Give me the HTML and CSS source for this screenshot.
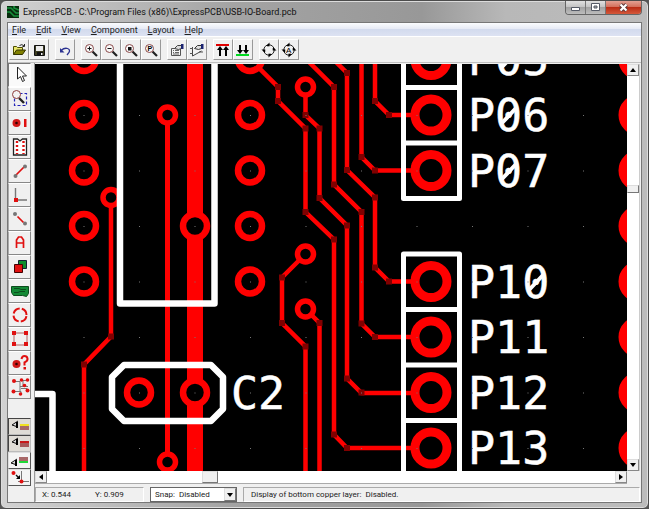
FILE: index.html
```html
<!DOCTYPE html>
<html lang="en">
<head>
<meta charset="utf-8">
<title>ExpressPCB - C:\Program Files (x86)\ExpressPCB\USB-IO-Board.pcb</title>
<link rel="stylesheet" href="styles.css">
</head>
<body>
<div class="window">
  <header class="titlebar">
    <svg class="app-icon" width="12" height="12" viewBox="0 0 12 12"><path fill="#072b0c" d="M0 0h12v12H0z"/><path fill="none" stroke="#15903a" stroke-width="1.600" d="M0 2h4l5 5h3M0 6h3l4 4h5M7 0v2l5 2"/></svg>
    <h1 class="title">ExpressPCB - C:\Program Files (x86)\ExpressPCB\USB-IO-Board.pcb</h1>
    <div class="controls">
      <button class="ctl" aria-label="Minimize"><svg width="11" height="9" viewBox="0 0 11 9"><path fill="#fff" stroke="#555a66" d="M1.500 4.500h8v3h-8z"/></svg></button>
      <button class="ctl" aria-label="Maximize"><svg width="11" height="9" viewBox="0 0 11 9"><path fill="#fff" stroke="#555a66" d="M1.500.5h8v7h-8z"/><path fill="#aaa" stroke="#555a66" d="M4 3h3v2H4z"/></svg></button>
      <button class="ctl close" aria-label="Close"><svg width="11" height="9" viewBox="0 0 11 9"><path stroke="#5c3a3a" stroke-width="4" d="M2.500 1.500l6 6m0-6l-6 6"/><path stroke="#fff" stroke-width="2.200" d="M2.500 1.500l6 6m0-6l-6 6"/></svg></button>
    </div>
  </header>
  <div class="client">
    <nav class="menubar">
      <button><u>F</u>ile</button><button><u>E</u>dit</button><button><u>V</u>iew</button><button><u>C</u>omponent</button><button><u>L</u>ayout</button><button><u>H</u>elp</button>
    </nav>
    <div class="toolbar">
      <div class="group">
        <button class="tool" aria-label="Open"><svg width="16" height="16" viewBox="0 0 16 16"><path fill="#e9e66a" stroke="#4c4c00" d="M2.500 12.500v-8h3l1 1h5v3"/><path fill="#808000" stroke="#333300" d="M2.500 12.500l3-4.500h9l-3 4.500z"/><path fill="none" stroke="#222" d="M8.500 3.500q2.500-2 4.500.5m.5-2v2.500h-2"/></svg></button>
        <button class="tool" aria-label="Save"><svg width="16" height="16" viewBox="0 0 16 16"><path fill="#3c3c20" stroke="#111" d="M3.500 3.500h10v10h-10z"/><path fill="#ececec" d="M5 4h7v5H5z"/><path fill="#111" d="M6 10h6v4H6z"/><path fill="#eee" d="M10 11h1.500v2H10z"/></svg></button>
      </div>
      <div class="group">
        <button class="tool" aria-label="Undo"><svg width="16" height="16" viewBox="0 0 16 16"><path fill="none" stroke="#2a3190" stroke-width="1.300" d="M4 8.500q3.500-3 6.500-2t1.500 4l-2 2.500"/><path fill="#2a3190" d="M3 6v4.500h4.500z"/></svg></button>
      </div>
      <div class="group">
        <button class="tool" aria-label="Zoom in"><svg width="16" height="16" viewBox="0 0 16 16"><path stroke="#222" stroke-width="2.200" d="M9.500 9.500l4.500 4.500"/><circle cx="6.500" cy="6.500" r="4" fill="#f8f8f8" stroke="#8b4a4a"/><path stroke="#111" d="M4.500 6.500h4m-2-2v4"/></svg></button>
        <button class="tool" aria-label="Zoom out"><svg width="16" height="16" viewBox="0 0 16 16"><path stroke="#222" stroke-width="2.200" d="M9.500 9.500l4.500 4.500"/><circle cx="6.500" cy="6.500" r="4" fill="#f8f8f8" stroke="#8b4a4a"/><path stroke="#111" d="M4.500 6.500h4"/></svg></button>
        <button class="tool" aria-label="Zoom to fit"><svg width="16" height="16" viewBox="0 0 16 16"><path stroke="#222" stroke-width="2.200" d="M9.500 9.500l4.500 4.500"/><circle cx="6.500" cy="6.500" r="4" fill="#f8f8f8" stroke="#8b4a4a"/><path fill="#111" d="M5 5h3.500v3.500H5z"/></svg></button>
        <button class="tool" aria-label="Zoom previous"><svg width="16" height="16" viewBox="0 0 16 16"><path stroke="#222" stroke-width="2.200" d="M9.500 9.500l4.500 4.500"/><circle cx="6.500" cy="6.500" r="4" fill="#f8f8f8" stroke="#8b4a4a"/><text class="icon-p" x="4.500" y="9">P</text></svg></button>
      </div>
      <div class="group">
        <button class="tool" aria-label="Properties"><svg width="16" height="16" viewBox="0 0 16 16"><path fill="#f4f4f4" stroke="#555" d="M2.500 6.500h9v7h-9z"/><path stroke="#666" d="M4 8.500h1m1 0h4M4 10.500h1m1 0h4M4 12h6"/><path fill="#ddd" stroke="#444" d="M5.500 6.500l3-3h4v3l-3 1z"/><path fill="#1a2370" d="M12 2h2.500v5H12z"/></svg></button>
        <button class="tool" aria-label="Component properties"><svg width="16" height="16" viewBox="0 0 16 16"><path fill="#f4f4f4" stroke="#444" d="M3.500 5v9l9-5"/><path stroke="#555" d="M1 6.500h3M1 11.500h3m6-1.500h4"/><path fill="#ddd" stroke="#333" d="M5.500 6.500l3-3h4v3l-3 1z"/><path fill="#1a2370" d="M12 2h2.500v5H12z"/></svg></button>
      </div>
      <div class="group">
        <button class="tool" aria-label="Top layer"><svg width="16" height="16" viewBox="0 0 16 16"><path fill="#e00000" d="M1 2h13v2H1z"/><path stroke="#000" stroke-width="2" d="M5 7v7m6-7v7"/><path d="M5 4l3 4H2zm6 0l3 4H8z"/></svg></button>
        <button class="tool" aria-label="Bottom layer"><svg width="16" height="16" viewBox="0 0 16 16"><path fill="#00d820" d="M1 12h13v2H1z"/><path stroke="#000" stroke-width="2" d="M5 3v6m6-6v6"/><path d="M5 12L2 8h6zm6 0L8 8h6z"/></svg></button>
      </div>
      <div class="group">
        <button class="tool" aria-label="Rotate"><svg width="16" height="16" viewBox="0 0 16 16"><circle cx="8" cy="8" r="5.200" fill="none" stroke="#222"/><path d="M5.500 3.500L8.500.5v6zM12.500 5.500l3 3h-6zM10.500 12.500l-3 3v-6zM3.500 10.500l-3-3h6z"/><circle cx="8" cy="8" r="3.800" fill="#f0f0f0"/></svg></button>
        <button class="tool" aria-label="Rotate by angle"><svg width="16" height="16" viewBox="0 0 16 16"><circle cx="8" cy="8" r="5.200" fill="none" stroke="#222"/><path d="M5.500 3.500L8.500.5v6zM12.500 5.500l3 3h-6zM10.500 12.500l-3 3v-6zM3.500 10.500l-3-3h6z"/><circle cx="8" cy="8" r="3.800" fill="#f0f0f0"/><text class="icon-a" x="5" y="11">A</text></svg></button>
      </div>
    </div>
    <div class="work">
      <aside class="palette">
        <button class="side on" aria-label="Select"><svg width="22" height="22" viewBox="0 0 22 22"><path fill="#fff" stroke="#222" d="M8.500 3v12l3-2.500 2 5 2-1-2-4.500h4z"/></svg></button>
        <button class="side" aria-label="Zoom region"><svg width="22" height="22" viewBox="0 0 22 22"><path fill="none" stroke="#2222b8" stroke-width="1.200" stroke-dasharray="3 2" d="M5.500 5.500h12v12h-12z"/><path stroke="#222" stroke-width="2.400" d="M10 10l5 5"/><circle cx="7.500" cy="6.500" r="4" fill="#f2f2f2" stroke="#8b3a3a"/></svg></button>
        <button class="side" aria-label="Place pad"><svg width="22" height="22" viewBox="0 0 22 22"><circle cx="7.500" cy="11" r="4" fill="#d01818"/><circle cx="7.500" cy="11" r="1.300" fill="#300"/><path fill="#e01010" d="M15 7h2.500v8H15z"/></svg></button>
        <button class="side" aria-label="Place component"><svg width="22" height="22" viewBox="0 0 22 22"><path fill="#fff" stroke="#222" stroke-width="1.300" d="M4.500 3h4l2.500 2 2.500-2h4v16h-13z"/><path stroke="#e01010" stroke-width="2.400" stroke-dasharray="2 2" d="M8 5v13m6.500-13v13"/></svg></button>
        <button class="side" aria-label="Place trace"><svg width="22" height="22" viewBox="0 0 22 22"><path stroke="#e01010" stroke-width="1.700" d="M7 15l8-8"/><circle cx="6.500" cy="16" r="2" fill="#777"/><circle cx="16" cy="6.500" r="2" fill="#777"/></svg></button>
        <button class="side" aria-label="Insert corner"><svg width="22" height="22" viewBox="0 0 22 22"><path fill="none" stroke="#777" stroke-width="1.400" d="M6.500 4v12H18"/><path fill="#e01010" d="M5 14h4v4H5z"/></svg></button>
        <button class="side" aria-label="Disconnect trace"><svg width="22" height="22" viewBox="0 0 22 22"><path stroke="#e01010" stroke-width="1.700" d="M8.500 8.500l6 6"/><circle cx="6" cy="6" r="2" fill="#777"/><circle cx="16" cy="15.500" r="2" fill="#777"/></svg></button>
        <button class="side" aria-label="Place text"><svg width="22" height="22" viewBox="0 0 22 22"><path fill="none" stroke="#e01010" stroke-width="1.700" d="M7.500 16V8l2-3h3l2 3v8m-7-5h7"/></svg></button>
        <button class="side" aria-label="Place rectangle"><svg width="22" height="22" viewBox="0 0 22 22"><path fill="#0c8c2c" stroke="#123" d="M9.500 4.500h8v8h-8z"/><path fill="#e01010" stroke="#400" d="M5.500 8.500h8v8h-8z"/></svg></button>
        <button class="side" aria-label="Place plane"><svg width="22" height="22" viewBox="0 0 22 22"><path fill="#128a35" stroke="#0a4c1c" d="M2.500 6.500h17v7l-2 3-4-1H4.500l-2-3z"/><path fill="none" stroke="#0a4c1c" d="M5 8.500h5l2 1h5M5 12.500h4l2-1h5"/></svg></button>
        <button class="side" aria-label="Place arc"><svg width="22" height="22" viewBox="0 0 22 22"><circle cx="11" cy="11" r="6.500" fill="none" stroke="#e01010" stroke-width="2" stroke-dasharray="8 2.210" stroke-dashoffset="-1.100"/></svg></button>
        <button class="side" aria-label="Place outline"><svg width="22" height="22" viewBox="0 0 22 22"><path fill="none" stroke="#b06060" d="M5 5h13v12H5z"/><path fill="#e01010" d="M3 3h4v4H3zM15 3h4v4h-4zM3 14h4v4H3zM15 14h4v4h-4z"/></svg></button>
        <button class="side" aria-label="Pad information"><svg width="22" height="22" viewBox="0 0 22 22"><circle cx="7.500" cy="12" r="4" fill="#d01818"/><circle cx="7.500" cy="12" r="1.300" fill="#300"/><path fill="none" stroke="#e01010" stroke-width="2" d="M12.500 7q.5-3 3-3t3 2.500-3 4v3"/><path fill="#e01010" d="M14.500 15h2.500v2.500h-2.500z"/></svg></button>
        <button class="side" aria-label="Highlight net"><svg width="22" height="22" viewBox="0 0 22 22"><path fill="none" stroke="#777" d="M5 5.500h6v10H5m6-5h8m-5 0v-6h5m-8 11h1v3m0-6h6v3"/><g fill="#e01010"><circle cx="5" cy="5" r="2"/><circle cx="12.500" cy="4" r="1.800"/><circle cx="18.500" cy="4" r="1.800"/><circle cx="15.500" cy="9.500" r="1.800"/><circle cx="4.500" cy="15.500" r="2"/><circle cx="11.500" cy="18" r="1.800"/><circle cx="18.500" cy="14.500" r="2"/></g></svg></button>
        <div class="views">
          <button class="view on" aria-label="View silkscreen"><svg width="21" height="15" viewBox="0 0 21 15"><path fill="#ddd" stroke="#111" d="M9 2L3 6l6 2"/><path d="M7 3h2v6H7z"/><path fill="#f0e020" d="M11 5h9v2h-9z"/><path fill="#a86868" d="M11 7h9v4h-9z"/></svg></button>
          <button class="view on" aria-label="View top copper"><svg width="21" height="15" viewBox="0 0 21 15"><path fill="#ddd" stroke="#111" d="M9 2L3 6l6 2"/><path d="M7 3h2v6H7z"/><path fill="#c81818" d="M11 5h9v2h-9z"/><path fill="#a85858" d="M11 7h9v4h-9z"/></svg></button>
          <button class="view" aria-label="View bottom copper"><svg width="21" height="15" viewBox="0 0 21 15"><path fill="#ddd" stroke="#111" d="M8 6L2 10l6 2"/><path d="M6 7h2v6H6z"/><path fill="#a86868" d="M10 4h9v4h-9z"/><path fill="#20d838" d="M10 8h9v2h-9z"/></svg></button>
          <button class="view" aria-label="Snap to corner"><svg width="21" height="15" viewBox="0 0 21 15"><path fill="none" stroke="#777" d="M12.500 1v11M9 11.500h11"/><path stroke="#111" stroke-width="1.400" d="M7 5l3 3"/><path d="M11 9V5L7 9z"/><circle cx="4.500" cy="3" r="2" fill="#e01010"/><circle cx="12.500" cy="11.500" r="2" fill="#e01010"/></svg></button>
        </div>
      </aside>
      <section class="main">
        <div class="viewport">
          <svg class="board" role="img" aria-label="USB IO board layout">
            <defs><pattern id="grid" x="83.500" y="59.500" width="55.500" height="55.500" patternUnits="userSpaceOnUse"><path fill="#777" d="M0 0h1v1H0z"/></pattern></defs>
            <g transform="translate(-35 -64)">
              <g class="trace">
                <path class="rail" d="M195 50v430"/>
                <path class="wide" d="M167.500 115v347"/>
                <path d="M111 198v138.500L84 364.500V480"/>
                <path d="M250 59l28 28v14l27.500 27.500V212l28.500 27.500V434.500l13 13.500h84"/>
                <path d="M305.500 87v28l14 13.500V198l27.500 27.500v153l14.500 14.500H431"/>
                <path d="M306 59l28 28v97.500l27.500 27.500v111.500L375 337h56"/>
                <path d="M333 59l14 14v97l28 27.500v70l14 14h42"/>
                <path d="M361.500 50v107L375 170.500h56"/>
                <path d="M375 50v51l14 14h42"/>
                <path d="M305.500 254L282 277.500V323l23.500 23.500V480"/>
                <path d="M305.500 309l14 14v157"/>
              </g>
              <path class="node" d="M111 336.500h0M84 364.500h0M278 87h0M278 101h0M305.500 128.500h0M305.500 212h0M334 239.500h0M334 434.500h0M347 448h0M305.500 115h0M319.500 128.500h0M319.500 198h0M347 225.500h0M347 378.500h0M361.500 392.500h0M334 87h0M334 184.500h0M361.500 212h0M361.500 323.500h0M375 337h0M347 73h0M347 170h0M375 197.500h0M375 267.500h0M389 281.500h0M361.500 157h0M375 170.500h0M375 101h0M389 115h0M282 277.500h0M282 323h0M305.500 346.500h0M319.500 323h0"/>
              <g class="pad">
                <circle cx="84" cy="59" r="12"/><circle cx="84" cy="115" r="12"/><circle cx="84" cy="170.500" r="12"/><circle cx="84" cy="226" r="12"/><circle cx="84" cy="281.500" r="12"/>
                <circle cx="250" cy="59" r="12"/><circle cx="250" cy="115" r="12"/><circle cx="250" cy="170.500" r="12"/><circle cx="250" cy="226" r="12"/><circle cx="250" cy="281.500" r="12"/>
                <circle cx="195" cy="226" r="12"/><circle cx="195" cy="392.500" r="12"/><circle cx="139" cy="392.500" r="12"/>
              </g>
              <g class="via">
                <circle cx="111" cy="197.500" r="8"/><circle cx="167.500" cy="115" r="8"/><circle cx="167.500" cy="462" r="8"/><circle cx="305.500" cy="87" r="8"/><circle cx="305.500" cy="254" r="8"/><circle cx="305.500" cy="309" r="8"/>
              </g>
              <g class="big">
                <circle cx="431" cy="59.500" r="16"/><circle cx="431" cy="115" r="16"/><circle cx="431" cy="170.500" r="16"/><circle cx="431" cy="281.500" r="16"/><circle cx="431" cy="337" r="16"/><circle cx="431" cy="392.500" r="16"/><circle cx="431" cy="448" r="16"/>
                <circle cx="639" cy="59.500" r="16"/><circle cx="639" cy="115" r="16"/><circle cx="639" cy="170.500" r="16"/><circle cx="639" cy="226" r="16"/><circle cx="639" cy="281.500" r="16"/><circle cx="639" cy="337" r="16"/><circle cx="639" cy="392.500" r="16"/><circle cx="639" cy="448" r="16"/>
              </g>
              <g class="silk">
                <path class="heavy" d="M120 50v253.500h94.500V50M124 365h87l12 12v32l-12 12h-87l-12-12v-32zM30 394h22.500v90"/>
                <path d="M403.500 50v148.500h56V50M403.500 87.500h56M403.500 143h56M403.500 480V254h56v226M403.500 309.500h56M403.500 365h56M403.500 420.500h56"/>
                <path class="slash" d="M502 67l15-16M502 123l15-16M502 179l15-16M529 290l15-16"/>
              </g>
              <g class="label">
                <text x="468" y="75">P05</text><text x="468" y="131">P06</text><text x="468" y="187">P07</text><text x="468" y="298">P10</text><text x="468" y="353">P11</text><text x="468" y="409">P12</text><text x="468" y="464">P13</text><text x="231" y="409">C2</text>
              </g>
              <rect x="35" y="64" width="100%" height="100%" fill="url(#grid)"/>
            </g>
          </svg>
        </div>
        <div class="scroll vertical">
          <button class="arrow" aria-label="Scroll up"><svg width="6" height="4" viewBox="0 0 6 4"><path d="M0 4l3-4 3 4z"/></svg></button>
          <span class="before"></span><span class="thumb"></span><span class="after"></span>
          <button class="arrow" aria-label="Scroll down"><svg width="6" height="4" viewBox="0 0 6 4"><path d="M0 0l3 4 3-4z"/></svg></button>
        </div>
        <div class="scroll horizontal">
          <button class="arrow" aria-label="Scroll left"><svg width="4" height="6" viewBox="0 0 4 6"><path d="M4 0L0 3l4 3z"/></svg></button>
          <span class="before"></span><span class="thumb"></span><span class="after"></span>
          <button class="arrow" aria-label="Scroll right"><svg width="4" height="6" viewBox="0 0 4 6"><path d="M0 0l4 3-4 3z"/></svg></button>
        </div>
        <footer class="status">
          <div class="pane coords"><span>X: 0.544</span><span>Y: 0.909</span></div>
          <div class="snap"><select aria-label="Snap"><option>Snap:&nbsp; Disabled</option></select><span class="drop"><svg width="6" height="4" viewBox="0 0 6 4"><path d="M0 0l3 4 3-4z"/></svg></span></div>
          <div class="pane message">Display of bottom copper layer:&nbsp; Disabled.</div>
        </footer>
      </section>
    </div>
  </div>
</div>
</body>
</html>
```
FILE: styles.css
```css
* { box-sizing: border-box; }
body { margin: 0; background: #555; font-family: Roboto, sans-serif; font-size: 9px; color: #222; }
button { margin: 0; padding: 0; border: 0; font: inherit; color: inherit; background: none; }
svg { display: block; }
.window { height: 100vh; display: flex; flex-direction: column; padding: 0 6px 5px; border: 1px solid #4c4c4c; border-radius: 6px; background: linear-gradient(90deg, #d2d2d2, #a4a4a4 35%, #989898 65%, #b8b8b8 78%, #bcbcbc); box-shadow: inset 0 0 0 1px #dcdcdc; }
.titlebar { display: flex; align-items: center; height: 21px; flex: none; }
.app-icon { flex: none; margin-right: 4px; }
.title { flex: 1; margin: 0; font-size: 9px; font-weight: 400; line-height: 20px; color: #111; white-space: nowrap; overflow: hidden; }
.controls { display: flex; align-self: flex-start; height: 14px; border: 1px solid #666; border-top: 0; border-radius: 0 0 4px 4px; overflow: hidden; }
.ctl { width: 20px; display: grid; place-items: center; background: linear-gradient(#e0e0e0, #c4c4c4 45%, #a2a2a2 50%, #bdbdbd); border-right: 1px solid #777; }
.ctl.close { width: 35px; border: 0; background: linear-gradient(#e3a093, #d4705c 45%, #bb2d16 50%, #d4593b); }
.client { flex: 1; min-height: 0; display: flex; flex-direction: column; background: #f0f0f0; border: 1px solid #777; }
.menubar { flex: none; height: 14px; display: flex; gap: 10px; padding-left: 4px; line-height: 14px; background: linear-gradient(#fbfcfe, #e6eaf5 45%, #d3dbee 50%, #dde2f2); border-bottom: 1px solid #fff; }
.menubar u { text-underline-offset: 1px; }
.toolbar { flex: none; height: 26px; display: flex; align-items: center; gap: 6px; padding-left: 1px; border-bottom: 1px solid #c0c0c0; }
.group { display: flex; }
.tool { width: 20px; height: 21px; display: grid; place-items: center; border: 1px solid; border-color: #fff #999 #999 #fff; }
.icon-p { font: bold 7px "Liberation Sans", sans-serif; }
.icon-a { font: 8px "Liberation Sans", sans-serif; }
.work { flex: 1; min-height: 0; display: flex; }
.palette { flex: none; width: 26px; display: flex; flex-direction: column; align-items: flex-start; }
.side { flex: none; width: 23px; height: 24px; border: 1px solid; border-color: #fff #888 #888 #aaa; }
.side.on { background: #fafafa; border-color: #777 #fff #fff #777; }
.views { margin-top: 19px; }
.view { display: block; width: 23px; height: 17px; border: 1px solid; border-color: #ddd #555 #555 #ddd; background: #f4f4f4; }
.view.on { background: #dfdcd6; border-color: #444 #bbb #bbb #444; }
.main { flex: 1; min-width: 0; display: grid; grid-template-columns: 1fr 13px; grid-template-rows: 1fr 13px 18px; border-left: 1px solid #999; padding-top: 1px; padding-right: 1px; }
.viewport { min-width: 0; min-height: 0; overflow: hidden; background: #000; }
.board { width: 100%; height: 100%; }
.trace { fill: none; stroke: #f00; stroke-width: 4.500; }
.rail { stroke-width: 16; }
.wide { stroke-width: 5; }
.node { stroke: #800000; stroke-width: 6; stroke-linecap: square; }
.pad, .via, .big { fill: #000; stroke: #f00; }
.pad { stroke-width: 6.500; }
.via { stroke-width: 5.500; }
.big { stroke-width: 9; }
.silk { fill: none; stroke: #fff; stroke-width: 5; stroke-linejoin: round; }
.heavy { stroke-width: 6.500; }
.slash { stroke-width: 4; }
.label { fill: #fff; stroke: #fff; stroke-width: 0.500; font: 45px "DejaVu Sans Mono", monospace; }
.scroll { display: flex; background: #fff; }
.vertical { flex-direction: column; border-right: 1px solid #ccc; }
.horizontal { border-bottom: 1px solid #aaa; }
.arrow { flex: none; width: 12px; height: 12px; display: grid; place-items: center; background: #f0f0f0; border: 1px solid; border-color: #ddd #888 #888 #ddd; }
.thumb { flex: none; background: #f0f0f0; border: 1px solid; border-color: #ddd #777 #777 #ddd; }
.vertical .thumb { height: 8px; }
.horizontal .thumb { width: 16px; }
.vertical .before { flex: 29; }
.vertical .after { flex: 71; }
.horizontal .before { flex: 28; }
.horizontal .after { flex: 72; }
.status { grid-column: 1 / -1; display: flex; gap: 6px; padding-top: 3px; font-size: 8px; line-height: 14px; }
.pane { border: 1px solid; border-color: #aaa #fff #fff #aaa; white-space: nowrap; }
.coords { width: 109px; display: flex; gap: 24px; padding-left: 6px; }
.message { flex: 1; padding-left: 7px; }
.snap { width: 87px; display: flex; background: #fff; border: 1px solid #666; }
.snap select { flex: 1; min-width: 0; appearance: none; border: 0; padding: 0 0 0 4px; background: none; font: inherit; color: inherit; }
.drop { width: 12px; display: grid; place-items: center; background: #f0f0f0; border: 1px solid; border-color: #ddd #777 #777 #ddd; }
```
